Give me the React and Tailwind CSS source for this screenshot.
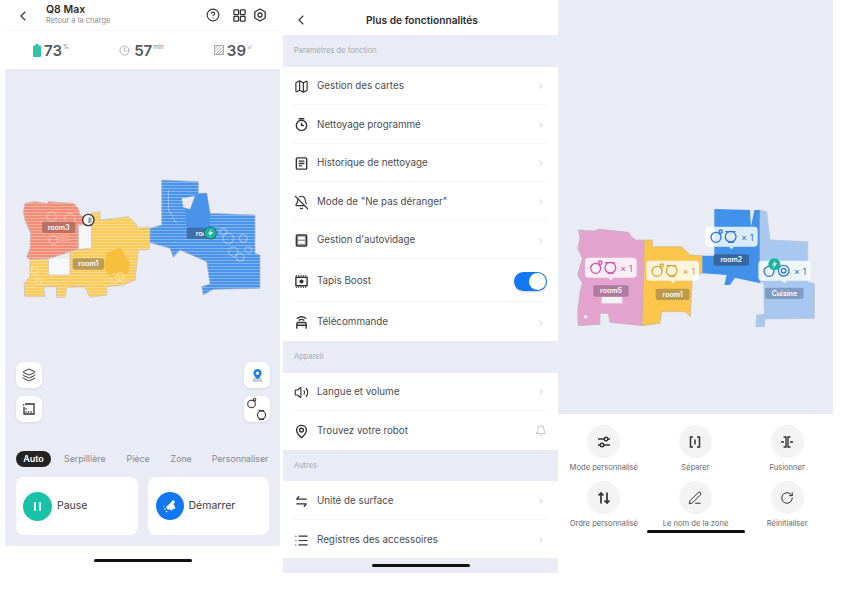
import { Bell, BellOff, ChevronLeft, ChevronRight, CircleHelp, Clock, Layers, List, Map as MapIcon, PenLine, RotateCw, Volume2 } from "lucide-react";

const RED = "M45,100 L75,95 L110,100 L115,95 L190,100 L205,115 L210,135 L245,150 L245,165 L205,165 L205,238 L180,245 L120,265 L60,268 L50,262 L60,235 L62,190 L45,150 L40,125 Z";
const YELLOW = "M245,128 L270,125 L270,150 L355,140 L380,165 L380,172 L418,172 L418,238 L385,240 L375,330 L340,345 L290,350 L290,375 L240,382 L225,350 L170,352 L165,382 L140,382 L140,350 L100,350 L105,380 L45,380 L42,342 L60,320 L60,268 L115,268 L115,315 L180,315 L180,245 L205,238 L245,235 Z";
const BLUE = "M455,30 L565,35 L565,70 L590,70 L600,130 L735,135 L735,250 L750,255 L750,355 L610,358 L580,375 L575,350 L600,342 L590,275 L510,240 L490,262 L480,235 L420,218 L420,175 L455,165 Z";
const PINK = "M40,105 L90,108 L100,102 L190,112 L200,125 L212,135 L238,135 L238,368 L232,392 L135,382 L130,355 L105,355 L105,388 L40,392 L38,350 L45,290 L52,265 L38,240 L52,190 L38,160 L45,130 Z";
const YELLOW2 = "M238,135 L262,135 L262,155 L350,155 L375,180 L412,182 L412,235 L382,240 L376,365 L360,350 L290,350 L285,385 L232,392 Z";
const BLUE2 = "M448,42 L555,45 L558,95 L568,45 L585,45 L585,265 L510,248 L495,270 L478,270 L485,240 L412,235 L412,182 L448,182 Z";
const LIGHT = "M585,45 L605,50 L615,135 L728,140 L728,262 L748,265 L748,370 L600,372 L598,395 L572,395 L575,360 L598,358 L596,262 L585,265 Z";

const BUBBLES = [
  [670, 245, 14], [700, 205, 12], [655, 205, 16], [690, 262, 12], [640, 185, 10], [715, 240, 10],
  [125, 140, 14], [180, 145, 15], [130, 210, 13], [315, 325, 14], [330, 320, 12], [75, 300, 11], [85, 335, 9],
];

function RoomLabel({ x, y, w, text, fill, size = 21 }) {
  return (
    <g>
      <rect x={x} y={y} width={w} height={34} rx={6} fill={fill} />
      <text x={x + w / 2} y={y + 24} textAnchor="middle" fill="#fff" fontSize={size} fontWeight="600">{text}</text>
    </g>
  );
}

function MapOne() {
  return (
    <svg viewBox="0 0 780 420" className="w-[260px] h-[140px] font-['Inter',sans-serif]">
      <defs>
        <pattern id="stripes" width="8" height="9" patternUnits="userSpaceOnUse">
          <rect width="8" height="3" fill="#fff" fillOpacity="0.3" />
        </pattern>
      </defs>
      <rect x="205" y="165" width="40" height="72" fill="#f5f6f9" />
      <rect x="115" y="266" width="65" height="50" fill="#f7f8fa" />
      <path d={RED} fill="#f48d77" stroke="#b9b9b9" strokeWidth="2" />
      <path d={YELLOW} fill="#fbcb5c" stroke="#b9b9b9" strokeWidth="2" />
      <path d={BLUE} fill="#4a93ea" stroke="#a9b4c4" strokeWidth="2" />
      <path d={RED} fill="url(#stripes)" />
      <path d={YELLOW} fill="url(#stripes)" />
      <path d={BLUE} fill="url(#stripes)" />
      <path d="M525,80 L565,72 L590,70 L600,130 L600,180 L530,180 L525,120 Z" fill="#4a93ea" />
      <path d="M290,250 L330,232 L360,280 L355,310 L300,320 L280,290 Z" fill="#f7bf3e" />
      <path d="M515,85 L555,78 L540,118 L520,112 Z" fill="#e9ecf4" />
      <path d="M475,60 L475,120 L500,160" fill="none" stroke="#fff" strokeOpacity="0.6" strokeWidth="2" />
      <circle cx="160" cy="204" r="18" fill="#f9a08d" />
      {BUBBLES.map(([cx, cy, r]) => (
        <circle key={`${cx}-${cy}`} cx={cx} cy={cy} r={r} fill="none" stroke="#fff" strokeWidth="2" strokeOpacity="0.65" />
      ))}
      <RoomLabel x={96} y={155} w={100} text="room3" fill="#b97164" />
      <RoomLabel x={188} y={265} w={94} text="room1" fill="#b99c5a" />
      <RoomLabel x={530} y={173} w={88} text="roo" fill="#3f70ac" />
      <circle cx="235" cy="150" r="17" fill="#fff" stroke="#333" strokeWidth="4" />
      <path d="M236,140 L246,145 L244,158 L234,160 Z" fill="#9aa0a8" />
      <circle cx="601" cy="189" r="18" fill="#14b89b" stroke="#1d6f78" strokeWidth="3" />
      <path d="M605,177 L594,192 L601,192 L597,202 L609,186 L602,186 Z" fill="#fff" />
    </svg>
  );
}

function Badge({ x, y, w, color, concentric }) {
  return (
    <g>
      <rect x={x} y={y} width={w} height={60} rx={10} fill="#fff" fillOpacity="0.82" />
      <path d={`M${x + w / 2 - 8},${y + 60} l8,8 l8,-8 Z`} fill="#fff" fillOpacity="0.82" />
      <g fill="none" stroke={color} strokeWidth="4">
        <circle cx={x + 32} cy={y + 32} r="15" />
        <circle cx={x + 46} cy={y + 15} r="5" />
        <circle cx={x + 76} cy={y + 30} r="16" />
        {concentric ? <circle cx={x + 76} cy={y + 30} r="7" /> : <path d={`M${x + 60},${y + 15} l30,0 M${x + 68},${y + 47} l18,0`} />}
      </g>
      <text x={x + w - 12} y={y + 43} textAnchor="end" fill={color} fontSize="28">× 1</text>
    </g>
  );
}

function MapTwo() {
  return (
    <svg viewBox="0 0 780 420" className="w-[260px] h-[140px] font-['Inter',sans-serif]">
      <path d={PINK} fill="#e4a3cf" stroke="#b5b5bd" strokeWidth="2" />
      <path d={YELLOW2} fill="#fcc64d" stroke="#c3b68e" strokeWidth="2" />
      <path d={BLUE2} fill="#4191eb" />
      <path d={LIGHT} fill="#a8c8f1" stroke="#b7c2d0" strokeWidth="2" />
      <rect x="110" y="305" width="62" height="20" fill="#f2f2f4" />
      <circle cx="62" cy="365" r="5" fill="#f2f2f4" />
      <Badge x={60} y={188} w={155} color="#d94fae" />
      <Badge x={244} y={197} w={158} color="#d9a72a" />
      <Badge x={421} y={95} w={157} color="#2a79d8" />
      <Badge x={580} y={197} w={156} color="#2a79d8" concentric />
      <RoomLabel x={85} y={271} w={106} text="room5" fill="#b07aa0" />
      <RoomLabel x={272} y={281} w={102} text="room1" fill="#bd9b4c" />
      <RoomLabel x={446} y={178} w={106} text="room2" fill="#37679f" />
      <RoomLabel x={600} y={278} w={116} text="Cuisine" fill="#7f9dc4" />
      <circle cx="628" cy="208" r="18" fill="#14b89b" />
      <path d="M632,196 L621,211 L628,211 L624,221 L636,205 L629,205 Z" fill="#fff" />
    </svg>
  );
}

function FloatButton({ children }) {
  return (
    <div className="w-[26px] h-[26px] rounded-[7px] bg-white flex items-center justify-center shadow-[0_1px_3px_rgba(0,0,0,0.08)]">
      {children}
    </div>
  );
}

function Stat({ icon, value, unit }) {
  return (
    <div className="flex items-center gap-[3px]">
      {icon}
      <span className="text-[15px] leading-none font-semibold text-[#55595f]">{value}</span>
      <span className="text-[6px] leading-none text-[#80858c] -ml-[2px] mb-[7px]">{unit}</span>
    </div>
  );
}

function RobotPanel() {
  return (
    <div className="w-[275px] shrink-0 flex flex-col">
      <div className="h-[30px] flex items-center">
        <ChevronLeft className="w-[16px] h-[16px] ml-[10px] mt-[2px] text-[#333]" strokeWidth={1.6} />
        <div className="ml-[15px] flex-1">
          <div className="text-[10.5px] leading-[12px] font-semibold text-[#2c2c2e]">Q8 Max</div>
          <div className="text-[7.5px] leading-[10px] text-[#8a8d92]">Retour à la charge</div>
        </div>
        <CircleHelp className="w-[14px] h-[14px] text-[#333]" strokeWidth={1.9} />
        <svg viewBox="0 0 14 14" className="w-[13px] h-[13px] ml-[13px]" fill="none" stroke="#333" strokeWidth="1.4">
          <rect x="1" y="1" width="5" height="5" rx="0.6" />
          <rect x="8" y="1" width="5" height="5" rx="0.6" />
          <rect x="1" y="8" width="5" height="5" rx="0.6" />
          <rect x="8" y="8" width="5" height="5" rx="0.6" />
        </svg>
        <svg viewBox="0 0 14 14" className="w-[14px] h-[14px] ml-[7px] mr-[13px]" fill="none" stroke="#333" strokeWidth="1.3">
          <path d="M7,1 L12.2,4 L12.2,10 L7,13 L1.8,10 L1.8,4 Z" strokeLinejoin="round" />
          <circle cx="7" cy="7" r="2" />
        </svg>
      </div>
      <div className="h-[39px] flex items-center justify-between pl-[28px] pr-[27px] border-t border-[#f4f5f7]">
        <Stat
          value="73"
          unit="%"
          icon={
            <svg viewBox="0 0 8 13" className="w-[8px] h-[13px]">
              <rect x="2.5" y="0" width="3" height="2" fill="#2cc6a5" />
              <rect x="0" y="1.5" width="8" height="11.5" rx="1" fill="#2cc6a5" />
            </svg>
          }
        />
        <Stat value="57" unit="min" icon={<Clock className="w-[11px] h-[11px] text-[#8d9197] mr-[1px]" strokeWidth={1.4} />} />
        <Stat
          value="39"
          unit="㎡"
          icon={
            <svg viewBox="0 0 10 10" className="w-[10px] h-[10px]" fill="none" stroke="#a3a6ab" strokeWidth="0.9">
              <rect x="0.5" y="0.5" width="9" height="9" />
              <path d="M0.5,4 L4,0.5 M0.5,7 L7,0.5 M1.5,9.5 L9.5,1.5 M4.5,9.5 L9.5,4.5 M7,9.5 L9.5,7" />
            </svg>
          }
        />
      </div>
      <div className="h-[477px] bg-[#e9ecf4] flex flex-col pt-[101px]">
        <div className="ml-[5px]"><MapOne /></div>
        <div className="mt-[52px] pl-[11px] pr-[10px] flex justify-between">
          <div className="flex flex-col gap-[8px]">
            <FloatButton><Layers className="w-[14px] h-[14px] text-[#333]" strokeWidth={1.7} /></FloatButton>
            <FloatButton>
              <svg viewBox="0 0 14 14" className="w-[14px] h-[14px]" fill="none" stroke="#333" strokeWidth="1.3">
                <path d="M3,2 L12,2 L12,12 L2,12 L2,5" />
                <path d="M4,10 h0.1 M6.5,10 h0.1 M9,10 h0.1 M4,7 h0.1 M1.5,3 h0.1" strokeWidth="1.6" strokeLinecap="round" />
              </svg>
            </FloatButton>
          </div>
          <div className="flex flex-col gap-[8px]">
            <FloatButton>
              <svg viewBox="0 0 14 14" className="w-[15px] h-[15px]">
                <path d="M2,13 L4,8 L10,8 L12,13 Z" fill="#c9ced6" />
                <path d="M7,1 C4.5,1 3.2,3 3.2,4.8 C3.2,7 7,10.5 7,10.5 C7,10.5 10.8,7 10.8,4.8 C10.8,3 9.5,1 7,1 Z" fill="#1f7df0" />
                <circle cx="7" cy="4.8" r="1.5" fill="#fff" />
              </svg>
            </FloatButton>
            <FloatButton>
              <svg viewBox="0 0 26 26" className="w-[26px] h-[26px]" fill="none" stroke="#333" strokeWidth="1.1">
                <circle cx="7.5" cy="8" r="3.8" />
                <circle cx="10.5" cy="3.8" r="1.3" />
                <circle cx="17.5" cy="19" r="4" />
                <path d="M13,15 L15,13" stroke="#ccc" />
                <path d="M15,14.5 L20,14.5 M15,23.5 L20,23.5" />
              </svg>
            </FloatButton>
          </div>
        </div>
        <div className="mt-[29px] pl-[11px] flex items-center text-[8.8px] text-[#85888d]">
          <span className="h-[16px] w-[35px] rounded-full bg-[#232326] text-white text-[9px] font-semibold flex items-center justify-center">Auto</span>
          <span className="ml-[13px]">Serpillière</span>
          <span className="ml-[21px]">Pièce</span>
          <span className="ml-[21px]">Zone</span>
          <span className="ml-[20px]">Personnaliser</span>
        </div>
        <div className="mt-[10px] px-[11px] flex gap-[10px]">
          <div className="w-[122px] h-[58px] rounded-[8px] bg-white flex items-center pl-[7px] gap-[5px]">
            <div className="w-[29px] h-[29px] rounded-full bg-[#19c2a8] flex items-center justify-center gap-[3px]">
              <span className="w-[2px] h-[9px] bg-white/90 rounded-sm" />
              <span className="w-[2px] h-[9px] bg-white/90 rounded-sm" />
            </div>
            <span className="text-[10.5px] text-[#3c3c3e]">Pause</span>
          </div>
          <div className="w-[122px] h-[58px] rounded-[8px] bg-white flex items-center pl-[8px] gap-[5px]">
            <div className="w-[28px] h-[28px] rounded-full bg-[#1277f2] flex items-center justify-center">
              <svg viewBox="0 0 14 14" className="w-[14px] h-[14px]" fill="#fff">
                <path d="M3,8 L7,4.5 L9,2 L10.5,1 L12,3 L10.5,5 L12.5,9 L8,11.5 L6,10 L5,11 Z" />
                <circle cx="2" cy="10" r="0.8" />
                <circle cx="3.5" cy="12.5" r="0.8" />
                <circle cx="1" cy="7" r="0.6" />
              </svg>
            </div>
            <span className="text-[10.5px] text-[#3c3c3e]">Démarrer</span>
          </div>
        </div>
      </div>
      <div className="mt-[13px] mx-auto w-[98px] h-[3px] rounded-full bg-[#111]" />
    </div>
  );
}

const iconCls = "w-[15px] h-[15px] text-[#333]";

const CustomIcon = ({ children }) => (
  <svg viewBox="0 0 16 16" className={iconCls} fill="none" stroke="currentColor" strokeWidth="1.5" strokeLinecap="round" strokeLinejoin="round">
    {children}
  </svg>
);

function Row({ icon, label, right, last, tall }) {
  return (
    <div className={`${tall ? "h-[43px]" : "h-[38.6px]"} mx-[11px] pt-[2px] flex items-center ${last ? "" : "border-b border-[#f3f4f6]"}`}>
      <div className="w-[15px] flex justify-center">{icon}</div>
      <span className="ml-[8px] flex-1 text-[9.8px] text-[#4a4c50]">{label}</span>
      {right || <ChevronRight className="w-[10px] h-[10px] mr-[1px] text-[#b3b6bb]" strokeWidth={1.6} />}
    </div>
  );
}

function Section({ title }) {
  return <div className="h-[31.5px] bg-[#e9ecf4] px-[11px] flex items-center text-[7.5px] text-[#a6a9b0]">{title}</div>;
}

function SettingsPanel() {
  return (
    <div className="w-[275px] ml-[3px] shrink-0 flex flex-col">
      <div className="h-[35px] relative flex items-center justify-center pl-[3px]">
        <ChevronLeft className="absolute left-[10px] top-[12px] w-[16px] h-[16px] text-[#333]" strokeWidth={1.6} />
        <span className="text-[10.2px] mt-[6px] font-semibold text-[#2c2c2e]">Plus de fonctionnalités</span>
      </div>
      <Section title="Paramètres de fonction" />
      <Row label="Gestion des cartes" icon={<MapIcon className={iconCls} strokeWidth={1.9} />} />
      <Row label="Nettoyage programmé" icon={
        <CustomIcon>
          <circle cx="8" cy="9" r="5.5" />
          <path d="M5.5,1.8 L10.5,1.8 M8,6.5 L8,9 L10,9" />
        </CustomIcon>
      } />
      <Row label="Historique de nettoyage" icon={
        <CustomIcon>
          <rect x="2.5" y="2" width="11" height="12" rx="1" />
          <path d="M5.5,5.5 L10.5,5.5 M5.5,8 L10.5,8 M5.5,10.5 L8,10.5" />
        </CustomIcon>
      } />
      <Row label={'Mode de "Ne pas déranger"'} icon={<BellOff className={iconCls} strokeWidth={1.8} />} />
      <Row label="Gestion d'autovidage" icon={
        <CustomIcon>
          <rect x="2.5" y="2" width="11" height="12" rx="1" fill="#8e9095" />
          <rect x="4.5" y="4" width="7" height="3" fill="#fff" stroke="none" />
          <rect x="4.5" y="8.5" width="7" height="3" fill="#fff" stroke="none" />
        </CustomIcon>
      } />
      <Row tall label="Tapis Boost" icon={
        <CustomIcon>
          <rect x="2" y="3.5" width="12" height="9" />
          <path d="M2,1.8 L14,1.8 M2,14.2 L14,14.2" strokeDasharray="1 1.5" strokeLinecap="butt" />
          <circle cx="8" cy="8" r="1.5" fill="currentColor" />
        </CustomIcon>
      } right={
        <div className="w-[33px] h-[19px] rounded-full bg-[#1277f2] flex items-center justify-end pr-[1px] shadow-[0_1px_2px_rgba(0,0,0,0.2)]">
          <div className="w-[17px] h-[17px] rounded-full bg-white" />
        </div>
      } />
      <Row last label="Télécommande" icon={
        <CustomIcon>
          <path d="M3,14 L3,9.5 Q3,8 4.5,8 L11.5,8 Q13,8 13,9.5 L13,14 M3,11 L13,11" />
          <path d="M5.5,5.5 Q8,3.8 10.5,5.5 M3.5,3.5 Q8,0.3 12.5,3.5" />
        </CustomIcon>
      } />
      <Section title="Appareil" />
      <Row label="Langue et volume" icon={<Volume2 className={iconCls} strokeWidth={1.8} />} />
      <Row last label="Trouvez votre robot" right={<Bell className="w-[12px] h-[12px] text-[#a9acb1]" strokeWidth={1.4} />} icon={
        <CustomIcon>
          <path d="M8,14.5 C8,14.5 2.8,10.5 2.8,6.5 C2.8,3.5 5.2,1.5 8,1.5 C10.8,1.5 13.2,3.5 13.2,6.5 C13.2,10.5 8,14.5 8,14.5 Z" />
          <circle cx="8" cy="6.5" r="2" />
        </CustomIcon>
      } />
      <Section title="Autres" />
      <Row label="Unité de surface" icon={
        <CustomIcon>
          <path d="M3,5.5 L13,5.5 M5,3 L3,5.5 M3,10.5 L13,10.5 L11,13" />
        </CustomIcon>
      } />
      <Row last label="Registres des accessoires" icon={<List className={iconCls} strokeWidth={1.9} />} />
      <div className="h-[15px] bg-[#e9ecf4] flex items-center justify-center">
        <div className="w-[98px] h-[3px] rounded-full bg-[#111]" />
      </div>
    </div>
  );
}

function ActionButton({ icon, label }) {
  return (
    <div className="flex flex-col items-center">
      <div className="w-[33px] h-[33px] rounded-full bg-[#f3f3f4] flex items-center justify-center">{icon}</div>
      <span className="mt-[4px] text-[7.6px] leading-[11px] text-[#66696e]">{label}</span>
    </div>
  );
}

function ZonesPanel() {
  const cls = "w-[14px] h-[14px] text-[#333]";
  return (
    <div className="w-[275px] shrink-0 flex flex-col">
      <div className="h-[414px] bg-[#e9ecf4] pt-[195px] pl-[7px]">
        <MapTwo />
      </div>
      <div className="mt-[11px] grid grid-cols-3 w-[275px] gap-y-[8px]">
        <ActionButton label="Mode personnalisé" icon={
          <svg viewBox="0 0 14 14" className={cls} fill="none" stroke="currentColor" strokeWidth="1.4">
            <path d="M1,4 L7,4 M11,4 L13,4 M1,10 L3,10 M7,10 L13,10" />
            <circle cx="9" cy="4" r="1.8" />
            <circle cx="5" cy="10" r="1.8" />
          </svg>
        } />
        <ActionButton label="Séparer" icon={
          <svg viewBox="0 0 14 14" className={cls} fill="none" stroke="currentColor" strokeWidth="1.5">
            <path d="M5,2 L2.5,2 L2.5,12 L5,12 M9,2 L11.5,2 L11.5,12 L9,12 M7,4.5 L7,9.5" />
          </svg>
        } />
        <ActionButton label="Fusionner" icon={
          <svg viewBox="0 0 14 14" className={cls} fill="none" stroke="currentColor" strokeWidth="1.4">
            <path d="M3.5,2 L6,2 L6,12 L3.5,12 M10.5,2 L8,2 L8,12 L10.5,12 M1,7 L4,7 M10,7 L13,7" />
          </svg>
        } />
        <ActionButton label="Ordre personnalisé" icon={
          <svg viewBox="0 0 14 14" className={cls} fill="none" stroke="currentColor" strokeWidth="1.7">
            <path d="M4,12.5 L4,2 M1.5,4.5 L4,2 L6.5,4.5 M10,1.5 L10,12 M7.5,9.5 L10,12 L12.5,9.5" />
          </svg>
        } />
        <ActionButton label="Le nom de la zone" icon={<PenLine className={cls} strokeWidth={1.7} />} />
        <ActionButton label="Réinitialiser" icon={<RotateCw className={cls} strokeWidth={1.7} />} />
      </div>
      <div className="mt-[1px] ml-[89px] w-[98px] h-[3px] rounded-full bg-[#111]" />
    </div>
  );
}

export default function App() {
  return (
    <div className="w-[842px] h-[596px] overflow-hidden bg-white flex pl-[5px] font-['Inter',sans-serif]">
      <RobotPanel />
      <SettingsPanel />
      <ZonesPanel />
    </div>
  );
}
